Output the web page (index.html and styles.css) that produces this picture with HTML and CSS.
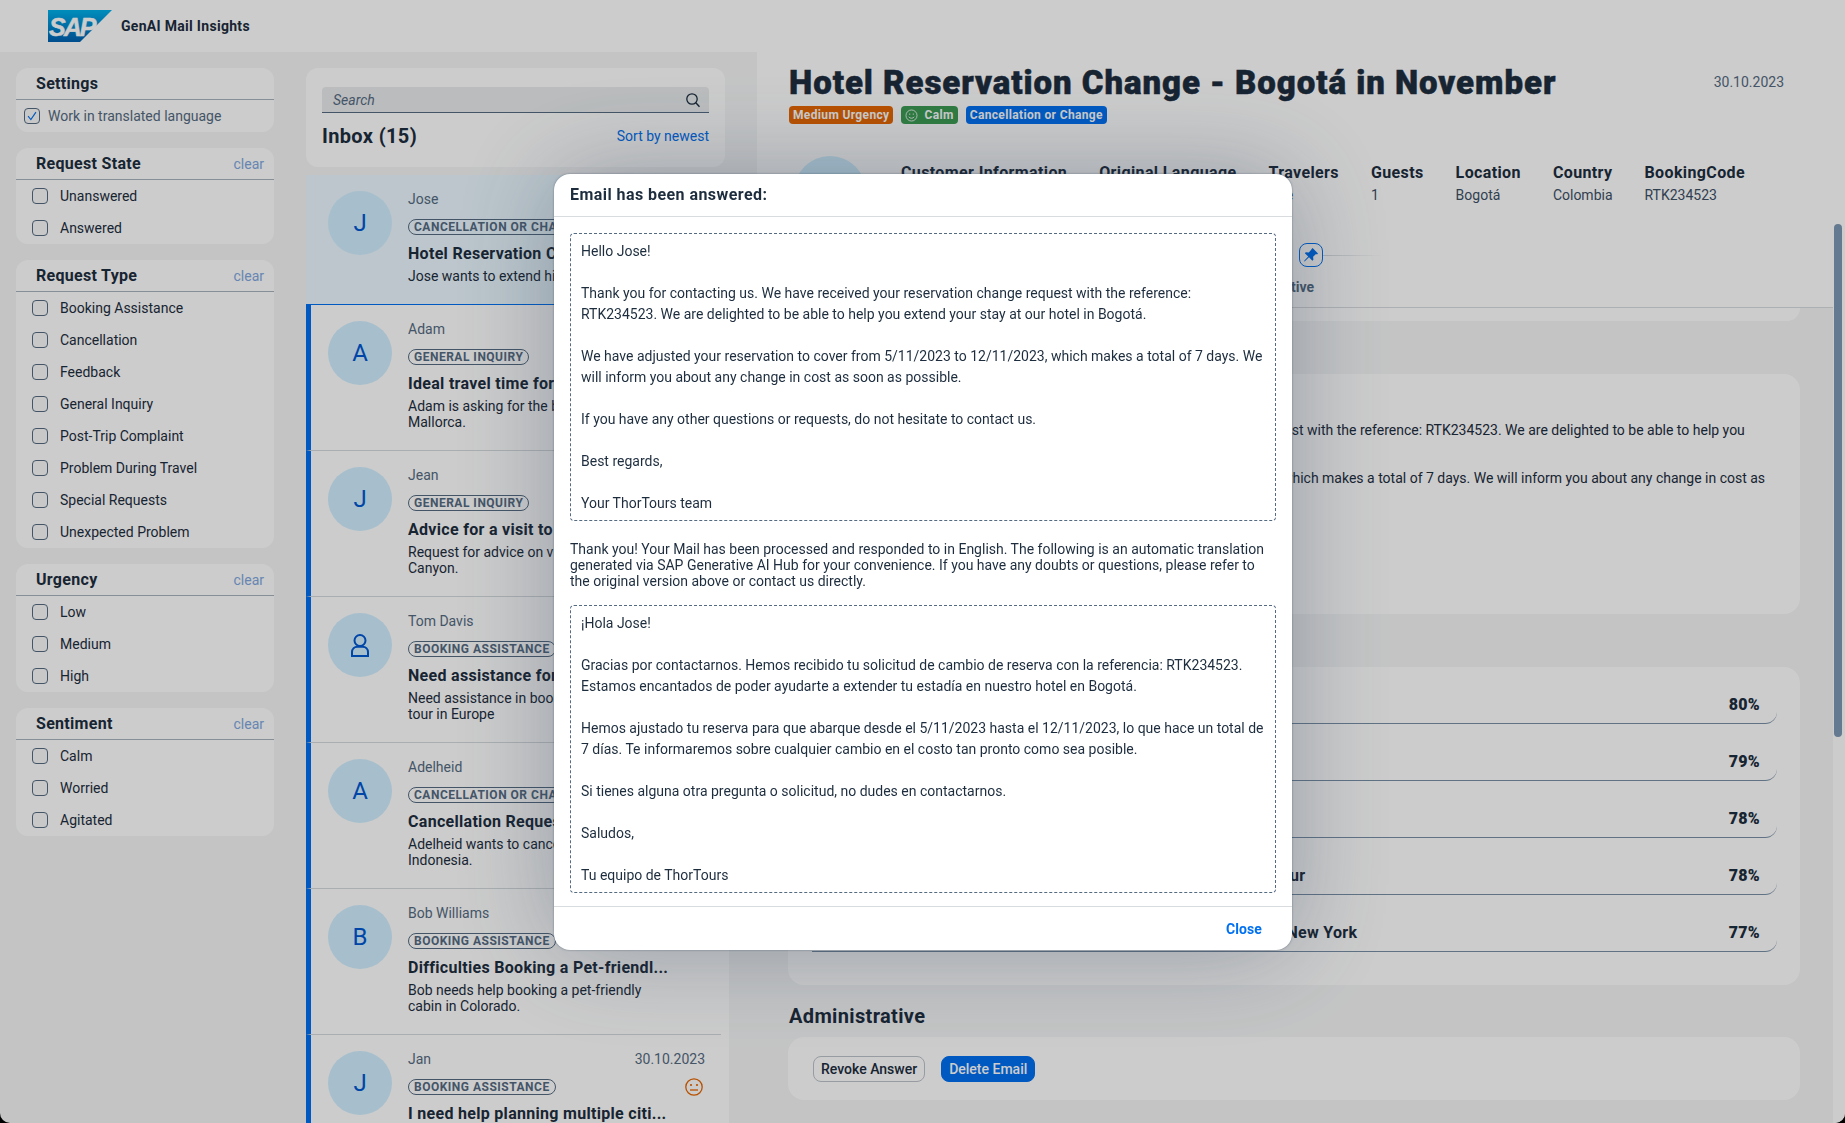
FILE: index.html
```html
<!DOCTYPE html>
<html lang="en">
<head>
<meta charset="utf-8">
<title>GenAI Mail Insights</title>
<link rel="stylesheet" href="styles.css">
</head>
<body>
<div class="app">
  <div class="left">
    <header class="topbar">
      <svg class="logo" viewBox="0 0 64 32" width="64" height="32">
        <defs><linearGradient id="sapg" x1="0" y1="0" x2="0" y2="1"><stop offset="0" stop-color="#00b1eb"/><stop offset="1" stop-color="#0061b1"/></linearGradient></defs>
        <polygon points="0,0 64,0 32,32 0,32" fill="url(#sapg)"/>
        <text class="logo-text" x="1" y="26">SAP</text>
      </svg>
      <span class="app-title">GenAI Mail Insights</span>
    </header>
    <div class="columns">
      <aside class="filters">
        <section class="fcard">
          <div class="fhead"><h3>Settings</h3></div>
          <label class="frow frow-set"><span class="cb cb-on"><svg viewBox="0 0 16 16" width="14" height="14"><path d="M3.5 8.2 6.700 12 12.500 3.500" fill="none" stroke="#0070f2" stroke-width="1.3"/></svg></span><span class="lbl-sec">Work in translated language</span></label>
        </section>
        <section class="fcard">
          <div class="fhead"><h3>Request State</h3><a class="clear">clear</a></div>
          <label class="frow"><span class="cb"></span>Unanswered</label>
          <label class="frow"><span class="cb"></span>Answered</label>
        </section>
        <section class="fcard">
          <div class="fhead"><h3>Request Type</h3><a class="clear">clear</a></div>
          <label class="frow"><span class="cb"></span>Booking Assistance</label>
          <label class="frow"><span class="cb"></span>Cancellation</label>
          <label class="frow"><span class="cb"></span>Feedback</label>
          <label class="frow"><span class="cb"></span>General Inquiry</label>
          <label class="frow"><span class="cb"></span>Post-Trip Complaint</label>
          <label class="frow"><span class="cb"></span>Problem During Travel</label>
          <label class="frow"><span class="cb"></span>Special Requests</label>
          <label class="frow"><span class="cb"></span>Unexpected Problem</label>
        </section>
        <section class="fcard">
          <div class="fhead"><h3>Urgency</h3><a class="clear">clear</a></div>
          <label class="frow"><span class="cb"></span>Low</label>
          <label class="frow"><span class="cb"></span>Medium</label>
          <label class="frow"><span class="cb"></span>High</label>
        </section>
        <section class="fcard">
          <div class="fhead"><h3>Sentiment</h3><a class="clear">clear</a></div>
          <label class="frow"><span class="cb"></span>Calm</label>
          <label class="frow"><span class="cb"></span>Worried</label>
          <label class="frow"><span class="cb"></span>Agitated</label>
        </section>
      </aside>
      <div class="inbox">
        <section class="searchcard">
          <div class="search"><span class="search-ph">Search</span>
            <svg viewBox="0 0 16 16" width="16" height="16"><circle cx="7" cy="7" r="5.2" fill="none" stroke="#1d2d3e" stroke-width="1.3"/><path d="M10.8 10.8 14.5 14.8" stroke="#1d2d3e" stroke-width="1.4"/></svg>
          </div>
          <div class="inbox-head"><h2>Inbox (15)</h2><a class="sort">Sort by newest</a></div>
        </section>
        <div class="listwrap">
          <ul class="list">
            <li class="item item-sel">
              <div class="avatar">J</div>
              <div class="ibody">
                <div class="iline"><span class="iname">Jose</span><span class="idate">30.10.2023</span></div>
                <div class="iline itagline"><span class="tag">Cancellation or Change</span></div>
                <div class="ititle">Hotel Reservation Change...</div>
                <p class="idesc">Jose wants to extend his stay in Bogotá.</p>
              </div>
            </li>
            <li class="item">
              <div class="avatar">A</div>
              <div class="ibody">
                <div class="iline"><span class="iname">Adam</span><span class="idate">30.10.2023</span></div>
                <div class="iline itagline"><span class="tag">General Inquiry</span></div>
                <div class="ititle">Ideal travel time for Mallorca</div>
                <p class="idesc">Adam is asking for the best time to visit<br>Mallorca.</p>
              </div>
            </li>
            <li class="item">
              <div class="avatar">J</div>
              <div class="ibody">
                <div class="iline"><span class="iname">Jean</span><span class="idate">30.10.2023</span></div>
                <div class="iline itagline"><span class="tag">General Inquiry</span></div>
                <div class="ititle">Advice for a visit to the Grand...</div>
                <p class="idesc">Request for advice on visiting the Grand<br>Canyon.</p>
              </div>
            </li>
            <li class="item">
              <div class="avatar"><svg viewBox="0 0 24 30" width="20" height="25"><circle cx="12" cy="9" r="6.6" fill="none" stroke="#0057d2" stroke-width="2.4"/><path d="M2.4 27.6v-4.5c0-4.2 3-6.6 6.4-6.6h6.4c3.4 0 6.4 2.4 6.4 6.600v4.500z" fill="none" stroke="#0057d2" stroke-width="2.4"/></svg></div>
              <div class="ibody">
                <div class="iline"><span class="iname iname-muted">Tom Davis</span><span class="idate">30.10.2023</span></div>
                <div class="iline itagline"><span class="tag">Booking Assistance</span></div>
                <div class="ititle">Need assistance for a booking</div>
                <p class="idesc">Need assistance in booking a guided<br>tour in Europe</p>
              </div>
            </li>
            <li class="item">
              <div class="avatar">A</div>
              <div class="ibody">
                <div class="iline"><span class="iname iname-muted">Adelheid</span><span class="idate">30.10.2023</span></div>
                <div class="iline itagline"><span class="tag">Cancellation or Change</span></div>
                <div class="ititle">Cancellation Request for Bali</div>
                <p class="idesc">Adelheid wants to cancel her trip to<br>Indonesia.</p>
              </div>
            </li>
            <li class="item">
              <div class="avatar">B</div>
              <div class="ibody">
                <div class="iline"><span class="iname iname-muted">Bob Williams</span><span class="idate">30.10.2023</span></div>
                <div class="iline itagline"><span class="tag">Booking Assistance</span></div>
                <div class="ititle">Difficulties Booking a Pet-friendl...</div>
                <p class="idesc">Bob needs help booking a pet-friendly<br>cabin in Colorado.</p>
              </div>
            </li>
            <li class="item">
              <div class="avatar">J</div>
              <div class="ibody">
                <div class="iline"><span class="iname iname-muted">Jan</span><span class="idate">30.10.2023</span></div>
                <div class="iline itagline"><span class="tag">Booking Assistance</span>
                  <svg class="face" viewBox="0 0 20 20" width="20" height="20"><circle cx="10" cy="10" r="8.2" fill="none" stroke="#e76500" stroke-width="1.3"/><circle cx="7" cy="8" r="1.1" fill="#e76500"/><circle cx="13" cy="8" r="1.1" fill="#e76500"/><path d="M6 13h8" stroke="#e76500" stroke-width="1.3"/></svg>
                </div>
                <div class="ititle">I need help planning multiple citi...</div>
              </div>
            </li>
          </ul>
          <div class="listtrack"></div>
        </div>
      </div>
    </div>
  </div>

  <main class="detail">
    <div class="detail-main">
      <header class="dhead">
        <div class="dtitle-row"><h1>Hotel Reservation Change - Bogotá in November</h1><span class="ddate">30.10.2023</span></div>
        <div class="badges">
          <span class="badge b-orange">Medium Urgency</span>
          <span class="badge b-green"><svg viewBox="0 0 16 16" width="13" height="13"><circle cx="8" cy="8" r="6.8" fill="none" stroke="#fff" stroke-width="1"/><circle cx="5.8" cy="6.2" r=".8" fill="#fff"/><circle cx="10.2" cy="6.2" r=".8" fill="#fff"/><path d="M4.6 9.6c1.6 2.4 5.2 2.4 6.8 0" fill="none" stroke="#fff" stroke-width="1"/></svg>Calm</span>
          <span class="badge b-blue">Cancellation or Change</span>
        </div>
        <div class="facts">
          <div class="avatar avatar-lg">J</div>
          <dl class="fact"><dt>Customer Information</dt><dd>Jose</dd></dl>
          <dl class="fact"><dt>Original Language</dt><dd>Spanish</dd></dl>
          <dl class="fact"><dt>Travelers</dt><dd>One</dd></dl>
          <dl class="fact"><dt>Guests</dt><dd>1</dd></dl>
          <dl class="fact"><dt>Location</dt><dd>Bogotá</dd></dl>
          <dl class="fact"><dt>Country</dt><dd>Colombia</dd></dl>
          <dl class="fact"><dt>BookingCode</dt><dd>RTK234523</dd></dl>
        </div>
        <div class="pinline">
          <button class="pin"><svg viewBox="0 0 16 16" width="16" height="16"><path d="M9.600 1 15 6.400l-1 1-1-.3-2.900 2.600.3 3-1 1L6 10.300 1.600 14.500 1 14l4.200-4.500L1.800 6.200l1-1 3 .3L8.400 2.600 8.600 2z" fill="#0070f2"/></svg></button>
          <span class="pinrule"></span>
        </div>
        <nav class="anchors"><a>Request Summary</a><a>Original Message</a><a>Proposed Answer</a><a>Administrative</a></nav>
      </header>
      <div class="dbody">
        <div class="pane pane-first"></div>
        <h2 class="sec">Answer</h2>
        <div class="pane pane-text">
          <p>Hello Jose!</p>
          <p>Thank you for contacting us. We have received your reservation change request with the reference: RTK234523. We are delighted to be able to help you<br>extend your stay at our hotel in Bogotá.</p>
          <p>We have adjusted your reservation to cover from 5/11/2023 to 12/11/2023, which makes a total of 7 days. We will inform you about any change in cost as<br>soon as possible.</p>
        </div>
        <h2 class="sec">Similar Requests</h2>
        <div class="pane pane-rows">
          <div class="srow"><span>Change of reservation dates for a hotel</span><b>80%</b></div>
          <div class="srow"><span>Extending a stay at a hotel in Bogotá</span><b>79%</b></div>
          <div class="srow"><span>Request to modify a booking in Colombia</span><b>78%</b></div>
          <div class="srow"><span>Changing the dates of my Colombian Coffee Growing Region Tour</span><b>78%</b></div>
          <div class="srow"><span>Modification of Reservation for a Hotel Stay During My Visit to New York</span><b>77%</b></div>
        </div>
        <h2 class="sec sec-admin">Administrative</h2>
        <div class="pane pane-admin">
          <button class="btn btn-ghost">Revoke Answer</button>
          <button class="btn btn-primary">Delete Email</button>
        </div>
      </div>
    </div>
    <div class="ptrack"><div class="pthumb"></div></div>
  </main>
</div>

<div class="blocklayer"></div>
<div class="dialog" role="dialog">
  <h2 class="dlg-title">Email has been answered:</h2>
  <div class="dlg-body">
    <div class="mailbox">Hello Jose!

Thank you for contacting us. We have received your reservation change request with the reference:
RTK234523. We are delighted to be able to help you extend your stay at our hotel in Bogotá.

We have adjusted your reservation to cover from 5/11/2023 to 12/11/2023, which makes a total of 7 days. We
will inform you about any change in cost as soon as possible.

If you have any other questions or requests, do not hesitate to contact us.

Best regards,

Your ThorTours team</div>
    <p class="dlg-note">Thank you! Your Mail has been processed and responded to in English. The following is an automatic translation<br>generated via SAP Generative AI Hub for your convenience. If you have any doubts or questions, please refer to<br>the original version above or contact us directly.</p>
    <div class="mailbox">¡Hola Jose!

Gracias por contactarnos. Hemos recibido tu solicitud de cambio de reserva con la referencia: RTK234523.
Estamos encantados de poder ayudarte a extender tu estadía en nuestro hotel en Bogotá.

Hemos ajustado tu reserva para que abarque desde el 5/11/2023 hasta el 12/11/2023, lo que hace un total de
7 días. Te informaremos sobre cualquier cambio en el costo tan pronto como sea posible.

Si tienes alguna otra pregunta o solicitud, no dudes en contactarnos.

Saludos,

Tu equipo de ThorTours</div>
  </div>
  <footer class="dlg-foot"><a class="dlg-close">Close</a></footer>
</div>
</body>
</html>
```
FILE: styles.css
```css
* { box-sizing: border-box; }
html { background: #000; height: 100%; overflow: hidden; }
body {
  margin: 0; width: 1845px; height: 1123px; overflow: hidden;
  font-family: Roboto, "Liberation Sans", sans-serif;
  font-size: 14px; color: #1d2d3e; background: #f5f6f7;
  border-radius: 0 0 10px 10px;
}
h1, h2, h3, p, ul, dl, dd { margin: 0; padding: 0; }
.app { display: flex; height: 1123px; }
.left { width: 757px; flex: none; display: flex; flex-direction: column; height: 1123px; overflow: hidden; }
.topbar { height: 52px; flex: none; background: #fff; display: flex; align-items: center; padding-left: 48px; gap: 9px; }
.logo { display: block; }
.logo-text { font-family: "Liberation Sans", sans-serif; font-weight: 700; font-style: italic; font-size: 25px; fill: #fff; stroke: #fff; stroke-width: .5px; letter-spacing: -2px; }
.app-title { font-weight: 700; font-size: 14px; letter-spacing: .3px; }
.columns { display: flex; flex: 1; min-height: 0; padding: 16px 0 0 16px; gap: 32px; }
.filters { width: 258px; flex: none; display: flex; flex-direction: column; gap: 16px; }
.fcard { background: #fff; border-radius: 12px; overflow: hidden; }
.fhead { height: 32px; display: flex; justify-content: space-between; align-items: center; padding: 0 10px 0 20px; border-bottom: 1px solid #a8b2bd; }
.fhead h3 { font-size: 16px; font-weight: 700; letter-spacing: .3px; }
.clear { color: #7fa8e0; font-size: 14px; }
.frow { height: 32px; display: flex; align-items: center; padding-left: 16px; gap: 12px; color: #1d2d3e; }
.frow-set { padding-left: 8px; gap: 8px; }
.lbl-sec { color: #556b82; }
.cb { width: 16px; height: 16px; border: 1px solid #556b82; border-radius: 4px; background: #fafafa; display: flex; align-items: center; justify-content: center; flex: none; }
.inbox { width: 419px; flex: none; display: flex; flex-direction: column; gap: 8px; min-height: 0; }
.searchcard { background: #fff; border-radius: 12px; padding: 19px 16px 0; height: 99px; flex: none; }
.search { height: 26px; background: #eaecee; border-bottom: 1px solid #556b82; border-radius: 4px 4px 0 0; display: flex; justify-content: space-between; align-items: center; padding: 0 8px 0 11px; }
.search-ph { font-style: italic; color: #556b82; }
.inbox-head { display: flex; justify-content: space-between; align-items: center; margin-top: 9px; height: 28px; }
.inbox-head h2 { font-size: 20px; font-weight: 700; letter-spacing: .35px; }
.sort { color: #0070f2; }
.listwrap { display: flex; flex: 1; min-height: 0; }
.list { list-style: none; width: 415px; flex: none; }
.listtrack { width: 8px; flex: none; background: #fff; }
.item { display: flex; height: 146px; background: #fff; border-left: 5px solid #0070f2; border-bottom: 1px solid #d5dadd; padding: 16px 16px 0 17px; gap: 16px; }
.item-sel { height: 130px; background: #ebf8ff; border-left: 0; padding-left: 22px; border-bottom-color: #0070f2; }
.avatar { width: 64px; height: 64px; border-radius: 50%; background: #d1efff; color: #0057d2; font-size: 24px; display: flex; align-items: center; justify-content: center; flex: none; }
.ibody { flex: 1; min-width: 0; }
.iline { display: flex; justify-content: space-between; align-items: center; height: 16px; }
.iname, .idate { color: #556b82; }
.itagline { margin-top: 12px; }
.tag { display: inline-block; height: 16px; line-height: 14px; border: 1px solid #556b82; border-radius: 8px; padding: 0 5px; font-size: 12px; font-weight: 700; letter-spacing: .5px; text-transform: uppercase; color: #556b82; white-space: nowrap; }
.face { margin-right: 1px; }
.ititle { margin-top: 9px; height: 20px; line-height: 20px; font-size: 16px; font-weight: 700; letter-spacing: .3px; white-space: nowrap; }
.idesc { margin-top: 4px; line-height: 16px; }
.detail { flex: 1; display: flex; min-width: 0; height: 1123px; overflow: hidden; }
.detail-main { width: 1076px; flex: none; }
.dhead { height: 308px; background: #fff; border-bottom: 1px solid #d9dcdf; padding: 56px 49px 0 32px; }
.dtitle-row { display: flex; justify-content: space-between; align-items: center; height: 52px; margin-bottom: -2px; }
.dtitle-row h1 { font-size: 33px; font-weight: 900; letter-spacing: .95px; -webkit-text-stroke: .5px #1d2d3e; white-space: nowrap; }
.ddate { color: #556b82; }
.badges { display: flex; gap: 8px; }
.badge { height: 18px; border-radius: 4px; padding: 0 4px; font-size: 12px; font-weight: 700; letter-spacing: .35px; color: #fff; display: flex; align-items: center; gap: 6px; white-space: nowrap; }
.b-orange { background: #e76500; }
.b-green { background: #3c9c52; }
.b-blue { background: #0070f2; }
.facts { display: flex; gap: 32px; margin-top: 32px; height: 72px; }
.avatar-lg { width: 72px; height: 72px; margin: 0 3px 0 5px; }
.fact { padding-top: 7px; }
.fact dt { font-size: 16px; font-weight: 700; letter-spacing: .38px; height: 20px; line-height: 20px; white-space: nowrap; }
.fact dd { height: 20px; line-height: 20px; margin-top: 2px; color: #3d5066; white-space: nowrap; }
.pinline { display: flex; align-items: center; margin-top: 15px; padding-left: 510px; height: 24px; }
.pin { width: 24px; height: 24px; border: 1px solid #0070f2; border-radius: 8px; background: #fff; padding: 0; display: flex; align-items: center; justify-content: center; flex: none; }
.pinrule { width: 60px; height: 1px; background: linear-gradient(90deg, #d5dadd, #fff); }
.anchors { display: flex; gap: 28px; justify-content: flex-end; padding-right: 470px; height: 20px; margin-top: 10px; line-height: 20px; font-weight: 700; color: #556b82; white-space: nowrap; }
.dbody { padding: 0 33px 0 31px; }
.pane { background: #fff; border-radius: 16px; }
.pane-first { height: 13px; border-radius: 0 0 16px 16px; }
.sec { font-size: 20px; font-weight: 700; letter-spacing: .35px; height: 53px; line-height: 53px; padding-left: 1px; }
.pane-text { height: 240px; padding: 20px 24px; line-height: 24px; white-space: nowrap; }
.pane-rows { height: 318px; padding: 0 23px 0 24px; }
.srow { height: 57px; display: flex; justify-content: space-between; align-items: center; padding: 19px 17px 0 4px; border-bottom: 1px solid #788fa6; border-radius: 0 0 12px 0; font-size: 16px; font-weight: 700; letter-spacing: .3px; white-space: nowrap; }
.sec-admin { height: 52px; padding-top: 8px; line-height: 46px; }
.pane-admin { height: 63px; display: flex; align-items: flex-start; gap: 16px; padding: 19px 25px; }
.btn { height: 26px; border-radius: 8px; font: inherit; font-weight: 500; font-size: 14px; padding: 0 7px; }
.btn-ghost { border: 1px solid #bcc3ca; background: #fff; color: #1d2d3e; }
.btn-primary { border: 1px solid #0070f2; background: #0070f2; color: #fff; }
.ptrack { flex: 1; background: #fff; padding-top: 224px; display: flex; justify-content: center; }
.pthumb { width: 8px; height: 513px; background: #7d99b4; border-radius: 4px; margin-left: -2px; }
.blocklayer { position: fixed; inset: 0; background: rgba(0, 0, 0, .2); }
.dialog {
  position: fixed; left: 554px; top: 174px; width: 738px; height: 776px;
  background: #fff; border-radius: 16px; display: flex; flex-direction: column;
  box-shadow: 0 0 2px rgba(40, 60, 85, .6), 0 0 100px rgba(40, 60, 85, .35);
  overflow: hidden;
}
.dlg-title { height: 43px; flex: none; display: flex; align-items: center; padding: 0 0 2px 16px; font-size: 16px; font-weight: 700; letter-spacing: .44px; border-bottom: 1px solid #d9dcdf; }
.dlg-body { flex: 1; padding: 16px 16px 0; }
.mailbox { border: 1px dashed #556b82; border-radius: 4px; padding: 7px 10px; white-space: pre; line-height: 21px; height: 288px; }
.dlg-note { line-height: 16px; margin: 20px 0 16px; white-space: nowrap; }
.dlg-foot { height: 44px; flex: none; border-top: 1px solid #d9dcdf; display: flex; justify-content: flex-end; align-items: center; padding-right: 30px; }
.dlg-close { color: #0070f2; font-weight: 700; letter-spacing: .1px; }
```
